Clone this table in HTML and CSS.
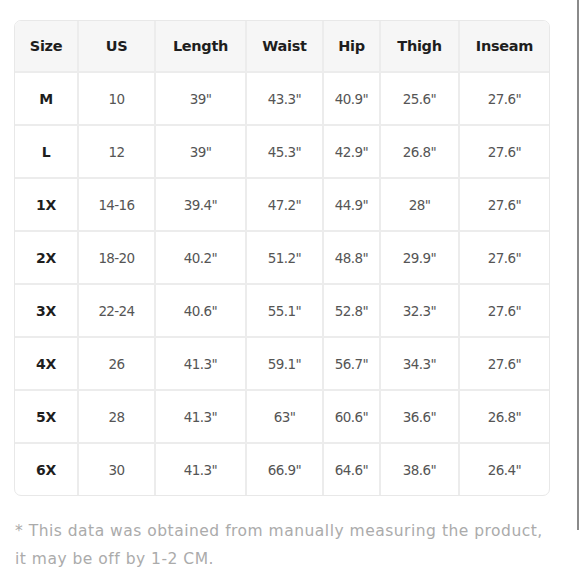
FILE: index.html
```html
<!DOCTYPE html>
<html>
<head>
<meta charset="utf-8">
<link rel="stylesheet" href="styles.css">
</head>
<body>
<div class="page">
  <div class="table-wrap">
    <table class="size-table">
      <colgroup>
        <col class="c1"><col class="c2"><col class="c3"><col class="c4"><col class="c5"><col class="c6"><col class="c7">
      </colgroup>
      <thead>
        <tr><th>Size</th><th>US</th><th>Length</th><th>Waist</th><th>Hip</th><th>Thigh</th><th>Inseam</th></tr>
      </thead>
      <tbody>
        <tr><td class="sz">M</td><td>10</td><td>39"</td><td>43.3"</td><td>40.9"</td><td>25.6"</td><td>27.6"</td></tr>
        <tr><td class="sz">L</td><td>12</td><td>39"</td><td>45.3"</td><td>42.9"</td><td>26.8"</td><td>27.6"</td></tr>
        <tr><td class="sz">1X</td><td>14-16</td><td>39.4"</td><td>47.2"</td><td>44.9"</td><td>28"</td><td>27.6"</td></tr>
        <tr><td class="sz">2X</td><td>18-20</td><td>40.2"</td><td>51.2"</td><td>48.8"</td><td>29.9"</td><td>27.6"</td></tr>
        <tr><td class="sz">3X</td><td>22-24</td><td>40.6"</td><td>55.1"</td><td>52.8"</td><td>32.3"</td><td>27.6"</td></tr>
        <tr><td class="sz">4X</td><td>26</td><td>41.3"</td><td>59.1"</td><td>56.7"</td><td>34.3"</td><td>27.6"</td></tr>
        <tr><td class="sz">5X</td><td>28</td><td>41.3"</td><td>63"</td><td>60.6"</td><td>36.6"</td><td>26.8"</td></tr>
        <tr><td class="sz">6X</td><td>30</td><td>41.3"</td><td>66.9"</td><td>64.6"</td><td>38.6"</td><td>26.4"</td></tr>
      </tbody>
    </table>
  </div>
  <p class="note">* This data was obtained from manually measuring the product, it may be off by 1-2 CM.</p>
</div>
<div class="scrollbar"></div>
</body>
</html>
```
FILE: styles.css
```css
html, body {
  margin: 0;
  padding: 0;
  background: #ffffff;
}
body {
  font-family: "DejaVu Sans", "Liberation Sans", sans-serif;
  width: 580px;
  height: 580px;
  overflow: hidden;
  position: relative;
}
.page {
  padding: 20px 30px 0 14px;
}
.table-wrap {
  width: 536px;
  border: 1px solid #e8e8e8;
  border-radius: 7px;
  overflow: hidden;
  box-sizing: border-box;
}
.size-table {
  width: 100%;
  border-collapse: collapse;
  table-layout: fixed;
}
.c1 { width: 63px; }
.c2 { width: 77px; }
.c3 { width: 91px; }
.c4 { width: 77px; }
.c5 { width: 57px; }
.c6 { width: 79px; }
.c7 { width: 90px; }
.size-table th,
.size-table td {
  border: 2px solid #ececec;
  text-align: center;
  padding: 0;
}
.size-table tr > :first-child { border-left: none; }
.size-table tr > :last-child { border-right: none; }
.size-table thead th { border-top: none; }
.size-table tbody tr:last-child td { border-bottom: none; }
.size-table th {
  height: 50px;
  background: #f6f6f6;
  color: #1e1e1e;
  font-weight: 700;
  font-size: 14.5px;
  letter-spacing: -0.3px;
}
.size-table td {
  height: 51px;
  color: #555555;
  font-size: 13.5px;
  letter-spacing: -0.6px;
}
.size-table td.sz {
  color: #1e1e1e;
  font-weight: 700;
  font-size: 14px;
  letter-spacing: -0.3px;
}
.note {
  margin: 21px 0 0 1px;
  font-size: 15.5px;
  line-height: 28px;
  color: #ababab;
  width: 537px;
  letter-spacing: 0.5px;
}
.scrollbar {
  position: absolute;
  left: 577px;
  top: 0;
  width: 2px;
  height: 530px;
  background: #8a8a8a;
}
```
